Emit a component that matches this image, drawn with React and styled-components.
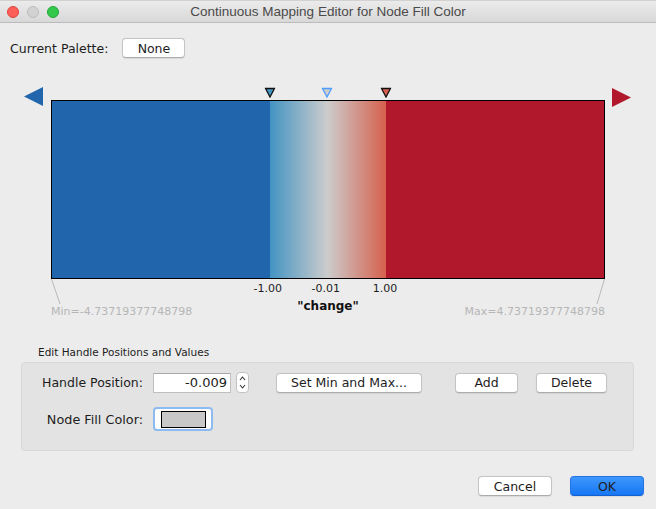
import React from 'react';
import styled, { createGlobalStyle } from 'styled-components';

const GlobalStyle = createGlobalStyle`
  html, body {
    margin: 0;
    padding: 0;
    background: #ececec;
  }
  body {
    font-family: "DejaVu Sans", "Liberation Sans", sans-serif;
    color: #1d1d1d;
  }
`;

const RANGE = { min: -4.73719377748798, max: 4.73719377748798 };

const HANDLES = [
  { value: -1.0, label: '-1.00', fill: '#4393c3', edge: '#111' },
  { value: -0.01, label: '-0.01', fill: '#cccccc', edge: '#4f9cff' },
  { value: 1.0, label: '1.00', fill: '#d6604d', edge: '#111' },
];

const pct = (v) => ((v - RANGE.min) / (RANGE.max - RANGE.min)) * 100;

const Window = styled.div`
  width: 656px;
  height: 509px;
  display: flex;
  flex-direction: column;
  background: #ececec;
  overflow: hidden;
`;

const TitleBar = styled.div`
  height: 23px;
  box-sizing: border-box;
  display: grid;
  grid-template-columns: 1fr auto 1fr;
  align-items: center;
  background: linear-gradient(#ebebeb, #d8d8d8);
  border-top: 1px solid #d2d2d2;
  border-bottom: 1px solid #bcbcbc;
`;

const Lights = styled.div`
  display: flex;
  gap: 8px;
  padding-left: 7px;
`;

const Light = styled.span`
  width: 12px;
  height: 12px;
  box-sizing: border-box;
  border-radius: 50%;
  background: ${(p) => p.$fill};
  border: 1px solid ${(p) => p.$edge};
`;

const Title = styled.div`
  font-family: "Liberation Sans", Arial, sans-serif;
  font-size: 13.5px;
  color: #4a4a4a;
`;

const PaletteRow = styled.div`
  display: flex;
  align-items: center;
  gap: 14px;
  padding: 15px 0 0 10px;
  font-size: 12.5px;
`;

const Button = styled.button`
  box-sizing: border-box;
  width: ${(p) => p.$w}px;
  height: ${(p) => p.$h || 20}px;
  padding: 0;
  margin-left: ${(p) => p.$ml || 0}px;
  font-family: "DejaVu Sans", sans-serif;
  font-size: 12.5px;
  color: #1d1d1d;
  background: ${(p) => (p.$primary ? 'linear-gradient(#3f97fc, #1677f5)' : '#ffffff')};
  border: 1px solid ${(p) => (p.$primary ? '#2474e6' : '#c4c4c4')};
  border-bottom-color: ${(p) => (p.$primary ? '#1560d0' : '#acacac')};
  border-radius: 4px;
  box-shadow: 0 0.5px 1px rgba(0, 0, 0, 0.08);
`;

const MappingRow = styled.div`
  display: flex;
  align-items: flex-start;
  padding: 29px 0 0 24px;
`;

const ArrowBox = styled.svg`
  display: block;
  flex: none;
  margin: ${(p) => (p.$right ? '1px 0 0 7px' : '0 8px 0 0')};
`;

const BarColumn = styled.div`
  width: 554px;
  flex: none;
  display: flex;
  flex-direction: column;
`;

const HandleTrack = styled.div`
  position: relative;
  height: 13px;
`;

const HandleMark = styled.svg`
  position: absolute;
  top: 0;
  transform: translateX(-50%);
`;

const Bar = styled.div`
  height: 179px;
  box-sizing: border-box;
  border: 1px solid #000;
`;

const BelowBar = styled.div`
  position: relative;
`;

const Leaders = styled.svg`
  position: absolute;
  top: 0;
  left: 0;
`;

const TickRow = styled.div`
  position: relative;
  height: 20px;
`;

const Tick = styled.span`
  position: absolute;
  top: 3px;
  transform: translateX(-56%);
  font-size: 11px;
  line-height: 14px;
  color: #1d1d1d;
`;

const Footer = styled.div`
  display: grid;
  grid-template-columns: 1fr auto 1fr;
  align-items: start;
`;

const RangeLabel = styled.span`
  margin-top: 6px;
  font-size: 11px;
  line-height: 14px;
  color: #b6b6b6;
  justify-self: ${(p) => (p.$end ? 'end' : 'start')};
`;

const AttrName = styled.span`
  font-size: 12px;
  font-weight: bold;
  line-height: 14px;
  color: #111;
`;

const Section = styled.div`
  padding: 26px 0 0 21px;
`;

const Caption = styled.div`
  padding-left: 17px;
  font-size: 10.5px;
  line-height: 14px;
  color: #1d1d1d;
`;

const Panel = styled.div`
  margin-top: 3px;
  width: 613px;
  height: 89px;
  box-sizing: border-box;
  padding-top: 9px;
  display: flex;
  flex-direction: column;
  gap: 14px;
  background: #e3e3e3;
  border: 1px solid #d8d8d8;
  border-radius: 4px;
`;

const FieldRow = styled.div`
  display: flex;
  align-items: center;
`;

const FieldLabel = styled.span`
  width: 121px;
  margin-right: 10px;
  text-align: right;
  font-size: ${(p) => p.$size || 12.5}px;
`;

const NumberInput = styled.input`
  box-sizing: border-box;
  width: 78px;
  height: 20px;
  padding: 0 3px 0 0;
  text-align: right;
  font-family: "DejaVu Sans", sans-serif;
  font-size: 13px;
  color: #1d1d1d;
  background: #fff;
  border: 1px solid #bfbfbf;
  border-top-color: #a9a9a9;
  outline: none;
`;

const Spinner = styled.svg`
  display: block;
  margin-left: 5px;
`;

const SwatchRing = styled.div`
  box-sizing: border-box;
  width: 60px;
  height: 24px;
  display: flex;
  align-items: center;
  justify-content: center;
  background: #fff;
  border: 2px solid #8dbaf0;
  border-radius: 4px;
`;

const Swatch = styled.div`
  width: 45px;
  height: 17px;
  box-sizing: border-box;
  background: ${(p) => p.$color};
  border: 1px solid #000;
`;

const Actions = styled.div`
  display: flex;
  justify-content: flex-end;
  gap: 18px;
  padding: 25px 12px 0 0;
`;

const Handle = ({ at, fill, edge }) => (
  <HandleMark width="11" height="11" viewBox="0 0 11 11" style={{ left: `${at}%` }}>
    <polygon points="1,1.5 10,1.5 5.5,10" fill={fill} stroke={edge} strokeWidth="1.3" strokeLinejoin="miter" />
  </HandleMark>
);

export default function App() {
  const [lo, mid, hi] = HANDLES.map((h) => pct(h.value));
  const gradient = `linear-gradient(to right, #2166ac ${lo}%, #4393c3 ${lo}%, #cccccc ${mid}%, #d6604d ${hi}%, #b2182b ${hi}%)`;

  return (
    <>
      <GlobalStyle />
      <Window>
        <TitleBar>
          <Lights>
            <Light $fill="#fc5f57" $edge="#e0443e" />
            <Light $fill="#d2d2d2" $edge="#bdbdbd" />
            <Light $fill="#34c84a" $edge="#27a53a" />
          </Lights>
          <Title>Continuous Mapping Editor for Node Fill Color</Title>
          <span />
        </TitleBar>

        <PaletteRow>
          <span>Current Palette:</span>
          <Button $w={63}>None</Button>
        </PaletteRow>

        <MappingRow>
          <ArrowBox width="19" height="20" viewBox="0 0 19 20">
            <polygon points="19,0 0,9.5 19,19" fill="#2166ac" />
          </ArrowBox>
          <BarColumn>
            <HandleTrack>
              {HANDLES.map((h) => (
                <Handle key={h.label} at={pct(h.value)} fill={h.fill} edge={h.edge} />
              ))}
            </HandleTrack>
            <Bar style={{ background: gradient }} />
            <BelowBar>
              <Leaders width="554" height="26" viewBox="0 0 554 26">
                <line x1="0.5" y1="0" x2="9" y2="25" stroke="#b9b9b9" strokeWidth="1" />
                <line x1="553.5" y1="0" x2="546" y2="25" stroke="#b9b9b9" strokeWidth="1" />
              </Leaders>
              <TickRow>
                {HANDLES.map((h) => (
                  <Tick key={h.label} style={{ left: `${pct(h.value)}%` }}>
                    {h.label}
                  </Tick>
                ))}
              </TickRow>
              <Footer>
                <RangeLabel>Min=-4.73719377748798</RangeLabel>
                <AttrName>"change"</AttrName>
                <RangeLabel $end>Max=4.73719377748798</RangeLabel>
              </Footer>
            </BelowBar>
          </BarColumn>
          <ArrowBox $right width="19" height="20" viewBox="0 0 19 20">
            <polygon points="0,0 19,9.5 0,19" fill="#b2182b" />
          </ArrowBox>
        </MappingRow>

        <Section>
          <Caption>Edit Handle Positions and Values</Caption>
          <Panel>
            <FieldRow>
              <FieldLabel>Handle Position:</FieldLabel>
              <NumberInput readOnly value="-0.009" />
              <Spinner width="13" height="21" viewBox="0 0 13 21">
                <rect x="0.5" y="0.5" width="12" height="20" rx="3.5" fill="#fff" stroke="#c2c2c2" />
                <path d="M4 8 L6.5 5 L9 8" fill="none" stroke="#333" strokeWidth="1.1" />
                <path d="M4 13 L6.5 16 L9 13" fill="none" stroke="#333" strokeWidth="1.1" />
              </Spinner>
              <Button $w={146} $ml={27}>Set Min and Max...</Button>
              <Button $w={63} $ml={33}>Add</Button>
              <Button $w={71} $ml={18}>Delete</Button>
            </FieldRow>
            <FieldRow>
              <FieldLabel $size={12.8}>Node Fill Color:</FieldLabel>
              <SwatchRing>
                <Swatch $color="#c8c8c8" />
              </SwatchRing>
            </FieldRow>
          </Panel>
        </Section>

        <Actions>
          <Button $w={74}>Cancel</Button>
          <Button $w={74} $primary>OK</Button>
        </Actions>
      </Window>
    </>
  );
}
